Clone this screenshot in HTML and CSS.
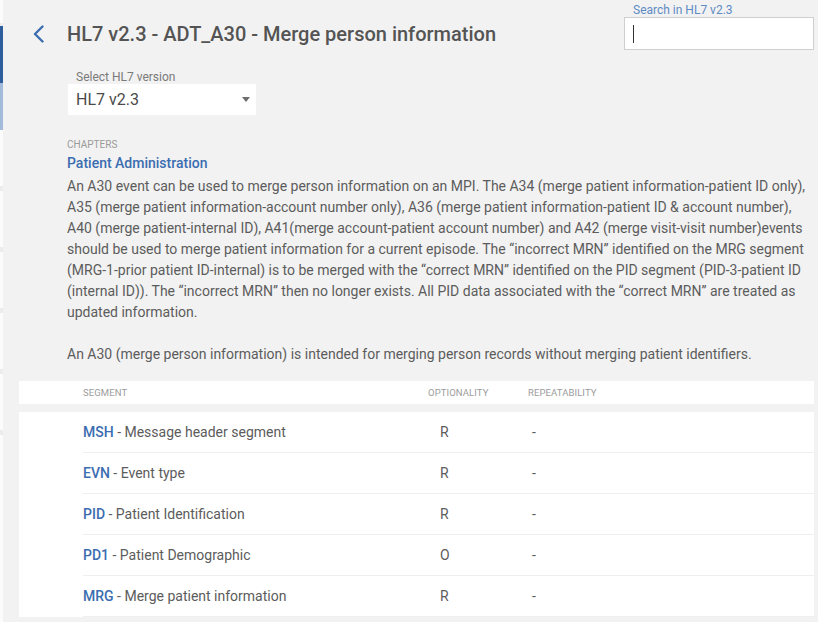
FILE: index.html
```html
<!DOCTYPE html>
<html lang="en">
<head>
<meta charset="utf-8">
<title>HL7 v2.3 - ADT_A30</title>
<link rel="stylesheet" href="styles.css">
</head>
<body>
<div class="app">
  <aside class="rail">
    <div class="rail-top"></div>
    <div class="rail-active"></div>
    <div class="rail-hover"></div>
    <div class="rail-item"></div>
    <div class="rail-item"></div>
    <div class="rail-item"></div>
    <div class="rail-item"></div>
    <div class="rail-item"></div>
  </aside>
  <main class="main">
    <header class="topbar">
      <a class="back" href="#" aria-label="Back">
        <svg width="14" height="18" viewBox="0 0 14 18"><path d="M10.5 1.5 L3 9 L10.5 16.5" fill="none" stroke="#3b6db0" stroke-width="2.4" stroke-linecap="round" stroke-linejoin="round"/></svg>
      </a>
      <h1 class="title">HL7 v2.3 - ADT_A30 - Merge person information</h1>
      <div class="search">
        <label class="search-label">Search in HL7 v2.3</label>
        <div class="search-input"><span class="cursor"></span></div>
      </div>
    </header>

    <section class="content">
      <div class="version">
        <div class="field-label">Select HL7 version</div>
        <div class="select"><span class="select-value">HL7 v2.3</span><span class="select-arrow"></span></div>
      </div>

      <div class="chapters-label">CHAPTERS</div>
      <div class="chapter">Patient Administration</div>
      <p class="desc">An A30 event can be used to merge person information on an MPI. The A34 (merge patient information-patient ID only), A35 (merge patient information-account number only), A36 (merge patient information-patient ID &amp; account number), A40 (merge patient-internal ID), A41(merge account-patient account number) and A42 (merge visit-visit number)events should be used to merge patient information for a current episode. The “incorrect MRN” identified on the MRG segment (MRG-1-prior patient ID-internal) is to be merged with the “correct MRN” identified on the PID segment (PID-3-patient ID (internal ID)). The “incorrect MRN” then no longer exists. All PID data associated with the “correct MRN” are treated as updated information.</p>
      <p class="desc">An A30 (merge person information) is intended for merging person records without merging patient identifiers.</p>
    </section>

    <div class="table">
      <div class="thead">
        <div class="th th-seg">Segment</div>
        <div class="th th-opt">Optionality</div>
        <div class="th th-rep">Repeatability</div>
      </div>
      <div class="tbody">
        <div class="row"><div class="seg"><span class="code">MSH</span> - Message header segment</div><div class="opt">R</div><div class="rep">-</div></div>
        <div class="row"><div class="seg"><span class="code">EVN</span> - Event type</div><div class="opt">R</div><div class="rep">-</div></div>
        <div class="row"><div class="seg"><span class="code">PID</span> - Patient Identification</div><div class="opt">R</div><div class="rep">-</div></div>
        <div class="row"><div class="seg"><span class="code">PD1</span> - Patient Demographic</div><div class="opt">O</div><div class="rep">-</div></div>
        <div class="row"><div class="seg"><span class="code">MRG</span> - Merge patient information</div><div class="opt">R</div><div class="rep">-</div></div>
      </div>
    </div>
  </main>
</div>
</body>
</html>
```

FILE: styles.css
```css
* { box-sizing: border-box; }
html, body { margin: 0; padding: 0; }
body {
  background: #f2f2f2;
  font-family: Roboto, "Liberation Sans", Arial, sans-serif;
  color: #5c5c5c;
  height: 622px;
  overflow: hidden;
}
.app { display: flex; min-height: 622px; }

.rail {
  width: 3px;
  flex: 0 0 3px;
  background: #fbfbfb;
  display: flex;
  flex-direction: column;
}
.rail-top { height: 26px; border-bottom: 3px solid #ececec; }
.rail-active { height: 57px; background: #2f5e9e; }
.rail-hover { height: 47px; background: #a2bbdb; }
.rail-item { height: 61px; border-bottom: 5px solid #ececec; }
.rail-item:first-of-type { height: 149px; }

.main { flex: 1; padding-right: 4px; }

.topbar {
  display: flex;
  align-items: flex-start;
  height: 63px;
}
.back {
  display: block;
  margin: 25px 0 0 29px;
  width: 14px;
  height: 18px;
  line-height: 0;
}
.title {
  margin: 22px 0 0 21px;
  font-size: 20px;
  font-weight: 500;
  line-height: 24px;
  color: #545454;
}
.search {
  margin-left: auto;
  width: 190px;
  padding-top: 3px;
}
.search-label {
  display: block;
  font-size: 12px;
  line-height: 14px;
  color: #5f8bc4;
  padding-left: 9px;
}
.search-input {
  height: 33px;
  background: #fff;
  border: 1px solid #cfcfcf;
  padding: 7px 0 0 8px;
}
.cursor {
  display: block;
  width: 1px;
  height: 18px;
  background: #333;
}

.content { padding: 7px 0 0 64px; }
.version { margin-left: 1px; }
.field-label {
  font-size: 12px;
  line-height: 14px;
  color: #7a7a7a;
  padding-left: 8px;
}
.select {
  width: 188px;
  height: 31px;
  background: #fff;
  display: flex;
  align-items: center;
  padding: 0 6px 0 8px;
}
.select-value {
  font-size: 16px;
  color: #4a4a4a;
  flex: 1;
}
.select-arrow {
  width: 0; height: 0;
  border-left: 4.5px solid transparent;
  border-right: 4.5px solid transparent;
  border-top: 5px solid #6e6e6e;
}

.chapters-label {
  margin-top: 24px;
  font-size: 10px;
  line-height: 12px;
  color: #9a9a9a;
}
.chapter {
  margin-top: 4px;
  font-size: 14px;
  font-weight: 500;
  line-height: 17px;
  color: #3b6db0;
}
.desc {
  margin: 4px 0 21px;
  font-size: 14px;
  line-height: 21px;
  color: #5c5c5c;
}
.desc + .desc { margin-top: 0; margin-bottom: 0; }

.table { margin: 16px 0 0 16px; }
.thead {
  display: grid;
  grid-template-columns: 345px 100px 1fr;
  background: #fff;
  height: 23px;
  padding-left: 64px;
  align-items: center;
}
.th {
  font-size: 9.5px;
  text-transform: uppercase;
  color: #9c9c9c;
  letter-spacing: 0.1px;
}
.tbody {
  margin-top: 8px;
  background: #fff;
  padding-left: 64px;
}
.row {
  display: grid;
  grid-template-columns: 345px 100px 1fr;
  height: 41px;
  align-items: center;
  border-bottom: 1px solid #efefef;
  font-size: 14px;
  color: #5c5c5c;
}
.code { color: #3b6db0; font-weight: 500; }
.opt { padding-left: 12px; }
.rep { padding-left: 4px; }
```
